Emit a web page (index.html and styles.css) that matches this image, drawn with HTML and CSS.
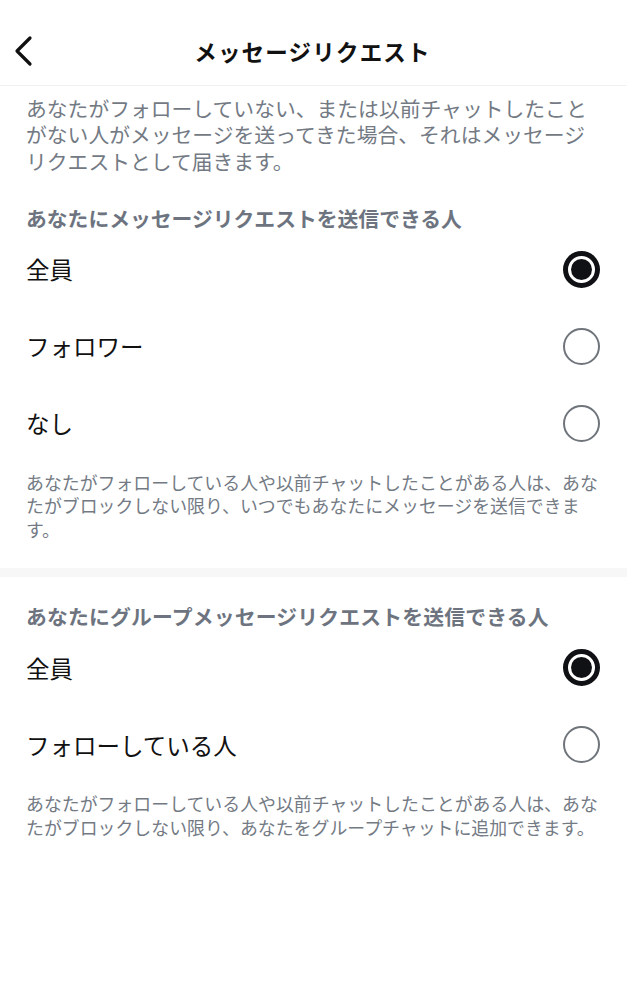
FILE: index.html
```html
<!DOCTYPE html>
<html lang="ja">
<head>
<meta charset="utf-8">
<title>メッセージリクエスト</title>
<link rel="stylesheet" href="styles.css">
</head>
<body>
<header class="header">
  <button class="back" aria-label="戻る">
    <svg width="24" height="34" viewBox="0 0 24 34"><path d="M18 4 L5 17 L18 30" fill="none" stroke="#111" stroke-width="3.2" stroke-linecap="round" stroke-linejoin="round"/></svg>
  </button>
  <h1 class="title">メッセージリクエスト</h1>
  <span class="spacer"></span>
</header>
<main>
  <section class="section">
    <p class="intro">あなたがフォローしていない、または以前チャットしたことがない人がメッセージを送ってきた場合、それはメッセージリクエストとして届きます。</p>
    <h2 class="heading">あなたにメッセージリクエストを送信できる人</h2>
    <ul class="options">
      <li class="option"><span class="label">全員</span><span class="radio selected"><span class="dot"></span></span></li>
      <li class="option"><span class="label">フォロワー</span><span class="radio"></span></li>
      <li class="option"><span class="label">なし</span><span class="radio"></span></li>
    </ul>
    <p class="note">あなたがフォローしている人や以前チャットしたことがある人は、あなたがブロックしない限り、いつでもあなたにメッセージを送信できます。</p>
  </section>
  <div class="band"></div>
  <section class="section second">
    <h2 class="heading">あなたにグループメッセージリクエストを送信できる人</h2>
    <ul class="options">
      <li class="option"><span class="label">全員</span><span class="radio selected"><span class="dot"></span></span></li>
      <li class="option"><span class="label">フォローしている人</span><span class="radio"></span></li>
    </ul>
    <p class="note">あなたがフォローしている人や以前チャットしたことがある人は、あなたがブロックしない限り、あなたをグループチャットに追加できます。</p>
  </section>
</main>
</body>
</html>
```

FILE: styles.css
```css
* { box-sizing: border-box; }
html, body {
  margin: 0;
  padding: 0;
  background: #fff;
}
body {
  font-family: "Noto Sans CJK JP", "Noto Sans", sans-serif;
  color: #111;
  width: 627px;
}
.header {
  height: 86px;
  display: flex;
  align-items: center;
  padding: 16px 12px 0 10px;
  border-bottom: 1px solid #f1f1f2;
}
.back {
  width: 28px;
  height: 34px;
  padding: 0;
  border: 0;
  background: none;
  display: flex;
  align-items: center;
  justify-content: center;
}
.spacer { width: 28px; }
.title {
  flex: 1;
  margin: 0;
  text-align: center;
  font-size: 22.5px;
  font-weight: 700;
  letter-spacing: 1.2px;
  line-height: 30px;
  color: #111;
}
.section {
  padding: 9px 27px 0 26px;
}
.second {
  padding-top: 26px;
}
.intro {
  margin: 0;
  font-size: 20.8px;
  line-height: 26.3px;
  color: #737a84;
}
.heading {
  margin: 31px 0 0;
  font-size: 20.8px;
  line-height: 26px;
  font-weight: 700;
  color: #6d7480;
}
.second .heading { margin-top: 0; letter-spacing: 0.2px; }
.options {
  list-style: none;
  margin: 0;
  padding: 0;
}
.option {
  height: 77px;
  display: flex;
  align-items: center;
  justify-content: space-between;
}
.label {
  font-size: 23.5px;
  line-height: 30px;
  color: #111;
}
.radio {
  width: 37px;
  height: 37px;
  border-radius: 50%;
  border: 2.5px solid #70757c;
  display: flex;
  align-items: center;
  justify-content: center;
}
.radio.selected {
  border: 5px solid #0f1115;
}
.dot {
  width: 21px;
  height: 21px;
  border-radius: 50%;
  background: #0f1115;
}
.note {
  margin: 9px 0 0;
  font-size: 17.9px;
  line-height: 23.5px;
  color: #737a84;
}
.band {
  height: 9px;
  margin-top: 27px;
  background: #f7f7f8;
}
```
